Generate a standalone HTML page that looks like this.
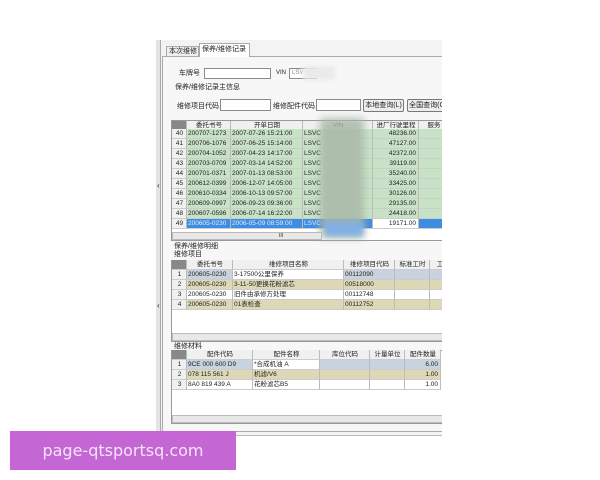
<!DOCTYPE html>
<html><head><meta charset="utf-8"><style>
*{margin:0;padding:0;box-sizing:border-box}
body{width:600px;height:480px;background:#fff;position:relative;overflow:hidden;font-family:"Liberation Sans","Noto Sans CJK SC",sans-serif;font-size:7px;color:#222}
.a{position:absolute}
.t{position:absolute;font-size:7px;white-space:nowrap;line-height:9px}
.in{position:absolute;background:#fff;border:1px solid #8a8a8a}
.btn{position:absolute;background:#eee;border:1px solid #777;border-radius:2px;font-size:7px;line-height:11px;text-align:center}
.grid{position:absolute;background:#fff;border:1px solid #999;overflow:hidden}
.row{position:absolute;left:0;height:10px;font-size:6.5px;line-height:10px;white-space:nowrap}
.c{position:absolute;top:0;height:10px;border-right:1px solid #bbb;border-bottom:1px solid #ccc;padding-left:1px;overflow:hidden}
.h{background:#f0f0f0;text-align:center}
.sb{position:absolute;height:8px;background:#e8e8e8;border:1px solid #bbb}
</style></head><body>
<div class="a" style="left:156px;top:40px;width:290px;height:396px;background:#f3f3f3;border-left:1px solid #aaa;border-bottom:1px solid #bbb"></div>
<div class="a" style="left:156px;top:40px;width:5px;height:396px;background:#e4e4e4;border-right:1px solid #aaa"></div>
<div class="t" style="left:157px;top:181px;font-size:8px">‹</div>
<div class="t" style="left:157px;top:301px;font-size:8px">‹</div>
<div class="a" style="left:162px;top:56px;width:284px;height:376px;background:#fff;border:1px solid #aaa"></div>
<div class="a" style="left:166px;top:46px;width:33px;height:11px;border:1px solid #aaa;background:#eee"></div>
<div class="t" style="left:169px;top:47px">本次维修</div>
<div class="a" style="left:199px;top:43px;width:51px;height:14px;border:1px solid #aaa;border-bottom:none;background:#fff"></div>
<div class="t" style="left:202px;top:45px">保养/维修记录</div>
<div class="a" style="left:163px;top:57px;width:283px;height:374px;background:#f7f7f7"></div>
<div class="t" style="left:179px;top:69px">车牌号</div>
<div class="in" style="left:204px;top:68px;width:67px;height:11px"></div>
<div class="t" style="left:276px;top:69px;font-size:6px">VIN</div>
<div class="in" style="left:289px;top:68px;width:28px;height:11px;border-right:none"></div>
<div class="t" style="left:292px;top:69px;color:#888;font-size:6px">LSV</div>
<div class="a" style="left:303px;top:66px;width:32px;height:14px;background:#eaeaea;filter:blur(2px)"></div>
<div class="t" style="left:175px;top:83px">保养/维修记录主信息</div>
<div class="t" style="left:177px;top:102px">维修项目代码</div>
<div class="in" style="left:220px;top:99px;width:51px;height:12px"></div>
<div class="t" style="left:273px;top:102px">维修配件代码</div>
<div class="in" style="left:316px;top:99px;width:45px;height:12px"></div>
<div class="btn" style="left:363px;top:99px;width:41px;height:13px">本地查询(L)</div>
<div class="btn" style="left:407px;top:99px;width:40px;height:13px">全国查询(G</div>
<div class="grid" style="left:171px;top:120px;width:276px;height:121px">
<div class="row" style="top:0;width:280px">
<div class="c h" style="left:0;width:15px;background:#888"></div><div class="c h" style="left:15px;width:44px">委托书号</div><div class="c h" style="left:59px;width:72px">开单日期</div><div class="c h" style="left:131px;width:70px">VIN</div><div class="c h" style="left:201px;width:46px">进厂行驶里程</div><div class="c h" style="left:247px;width:30px">服务</div></div>
</div>
<div id="g1"></div>
<div class="a" style="left:320px;top:118px;width:44px;height:120px;background:#a9b8a8;filter:blur(4px);opacity:.85"></div>
<div class="a" style="left:325px;top:222px;width:38px;height:14px;background:#7fb0e6;filter:blur(3px)"></div>
<div class="sb" style="left:172px;top:232px;width:150px"></div>
<div class="t" style="left:279px;top:232px;font-size:5px">III</div>
<div class="t" style="left:174px;top:242px">保养/维修明细</div>
<div class="t" style="left:174px;top:250px">维修项目</div>
<div class="grid" style="left:171px;top:260px;width:276px;height:82px"></div>
<div id="g2"></div>
<div class="sb" style="left:172px;top:333px;width:275px"></div>
<div class="t" style="left:174px;top:342px">维修材料</div>
<div class="grid" style="left:171px;top:350px;width:276px;height:74px"></div>
<div id="g3"></div>
<div class="sb" style="left:172px;top:415px;width:275px"></div>
<div class="a" style="left:442px;top:36px;width:160px;height:410px;background:#fff"></div>
<div class="a" style="left:10px;top:431px;width:226px;height:39px;background:#c466d4;color:#f4e6f7;font-size:16px;line-height:39px;text-align:center;font-family:'DejaVu Sans',sans-serif">page-qtsportsq.com</div>
<script>
function rows(id,top,left,cols,data,styles){var h='';data.forEach(function(r,i){h+='<div class="row" style="top:'+(top+i*10)+'px;left:'+left+'px">';var x=0;cols.forEach(function(w,j){var st=styles(i,j);h+='<div class="c" style="left:'+x+'px;width:'+w+'px;'+st+'">'+r[j]+'</div>';x+=w});h+='</div>'});document.getElementById(id).innerHTML=h}
var d1=[["40","200707-1273","2007-07-26 15:21:00","LSVC","48236.00"],["41","200706-1076","2007-06-25 15:14:00","LSVC","47127.00"],["42","200704-1052","2007-04-23 14:17:00","LSVC","42372.00"],["43","200703-0709","2007-03-14 14:52:00","LSVC","39119.00"],["44","200701-0371","2007-01-13 08:53:00","LSVC","35240.00"],["45","200612-0399","2006-12-07 14:05:00","LSVC","33425.00"],["46","200610-0334","2006-10-13 09:57:00","LSVC","30126.00"],["47","200609-0997","2006-09-23 09:36:00","LSVC","29135.00"],["48","200607-0596","2006-07-14 16:22:00","LSVC","24418.00"],["49","200605-0230","2006-05-09 08:59:00","LSVC","19171.00"]];
d1.forEach(function(r){r.push("")});
rows("g1",129,172,[15,44,72,70,46,28],d1,function(i,j){if(j==0)return "background:#f0f0f0;text-align:center";if(j==4)return (i==9?"background:#fff;":"background:#c7e2c5;")+"text-align:right;padding-right:2px";if(i==9)return "background:#3d8de0;color:#dfefff";return "background:#c7e2c5"});
var d2=[["1","200605-0230","3-17500公里保养","00112090","",""],["2","200605-0230","3-11-50更换花粉滤芯","00518000","",""],["3","200605-0230","旧件由承修方处理","00112748","",""],["4","200605-0230","01表检查","00112752","",""]];
d2.unshift(["","委托书号","维修项目名称","维修项目代码","标准工时","工"]);
rows("g2",260,172,[15,46,111,51,35,20],d2,function(i,j){if(i==0&&j==0)return "background:#888";if(i==0)return "background:#f0f0f0;text-align:center";if(j==0)return "background:#f0f0f0;text-align:center";var k=i-1;if(k==0&&(j==1||j==3||j>=4))return "background:#c9d3e0";if(k%2==1&&j!=0)return "background:#ddd9b6";return "background:#fff"});
var d3=[["","配件代码","配件名称","库位代码","计量单位","配件数量"],["1","9CE 000 600 D9","*合成机油 A","","","6.00"],["2","078 115 561 J","机滤/V6","","","1.00"],["3","8A0 819 439 A","花粉滤芯B5","","","1.00"]];
rows("g3",350,172,[15,66,67,50,35,36],d3,function(i,j){if(i==0&&j==0)return "background:#888";if(i==0||j==0)return "background:#f0f0f0;text-align:center";var s=j==5?"text-align:right;padding-right:2px;":"";if(i==1&&j!=2)return s+"background:#c9d3e0";if(i==2)return s+"background:#ddd9b6";return s+"background:#fff"});
</script>
</body></html>
